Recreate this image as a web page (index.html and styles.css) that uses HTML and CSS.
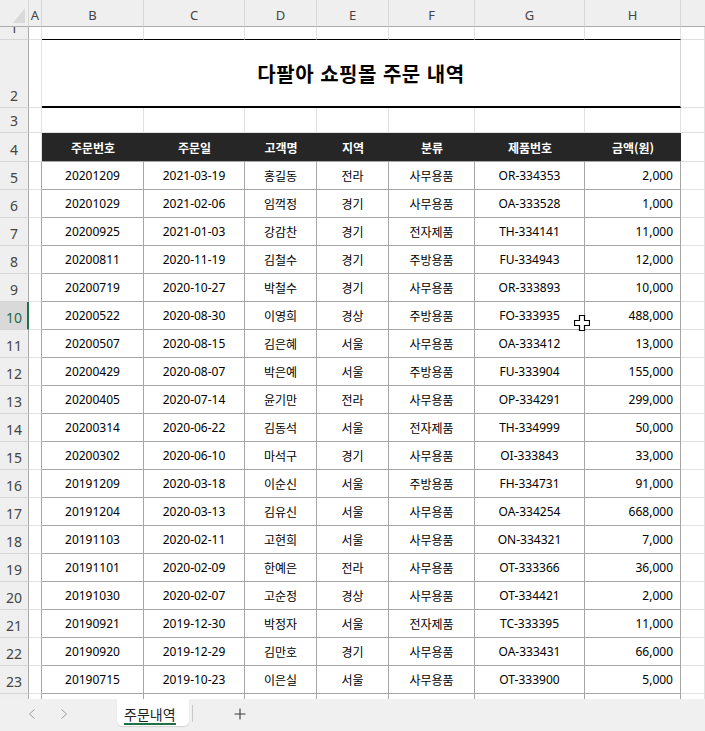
FILE: index.html
```html
<!DOCTYPE html>
<html lang="ko">
<head>
<meta charset="utf-8">
<title>주문내역</title>
<link rel="stylesheet" href="styles.css">
</head>
<body>
<div class="app">
  <div class="sheet">
    <div class="r hc">
      <div class="corner"><span class="tri"></span></div>
      <div class="ch">A</div><div class="ch">B</div><div class="ch">C</div><div class="ch">D</div><div class="ch">E</div><div class="ch">F</div><div class="ch">G</div><div class="ch">H</div><div class="ch last"></div>
    </div>
    <div class="r h1">
      <div class="rh">1</div><div class="g"></div>
      <div class="g top"></div><div class="g top"></div><div class="g top"></div><div class="g top"></div><div class="g top"></div><div class="g top"></div><div class="g top"></div><div class="g"></div>
    </div>
    <div class="r h2">
      <div class="rh">2</div><div class="g"></div>
      <div class="title">다팔아 쇼핑몰 주문 내역</div>
      <div class="g"></div>
    </div>
    <div class="r h3">
      <div class="rh">3</div><div class="g"></div>
      <div class="g"></div><div class="g"></div><div class="g"></div><div class="g"></div><div class="g"></div><div class="g"></div><div class="g"></div><div class="g"></div>
    </div>
    <div class="r h4">
      <div class="rh">4</div><div class="g"></div>
      <div class="th">주문번호</div><div class="th">주문일</div><div class="th">고객명</div><div class="th">지역</div><div class="th">분류</div><div class="th">제품번호</div><div class="th">금액(원)</div>
      <div class="g"></div>
    </div>
    <div class="r hd"><div class="rh">5</div><div class="ta"></div><div class="t">20201209</div><div class="t">2021-03-19</div><div class="t">홍길동</div><div class="t">전라</div><div class="t">사무용품</div><div class="t">OR-334353</div><div class="t num">2,000</div><div class="g"></div></div>
    <div class="r hd"><div class="rh">6</div><div class="ta"></div><div class="t">20201029</div><div class="t">2021-02-06</div><div class="t">임꺽정</div><div class="t">경기</div><div class="t">사무용품</div><div class="t">OA-333528</div><div class="t num">1,000</div><div class="g"></div></div>
    <div class="r hd"><div class="rh">7</div><div class="ta"></div><div class="t">20200925</div><div class="t">2021-01-03</div><div class="t">강감찬</div><div class="t">경기</div><div class="t">전자제품</div><div class="t">TH-334141</div><div class="t num">11,000</div><div class="g"></div></div>
    <div class="r hd"><div class="rh">8</div><div class="ta"></div><div class="t">20200811</div><div class="t">2020-11-19</div><div class="t">김철수</div><div class="t">경기</div><div class="t">주방용품</div><div class="t">FU-334943</div><div class="t num">12,000</div><div class="g"></div></div>
    <div class="r hd"><div class="rh">9</div><div class="ta"></div><div class="t">20200719</div><div class="t">2020-10-27</div><div class="t">박철수</div><div class="t">경기</div><div class="t">사무용품</div><div class="t">OR-333893</div><div class="t num">10,000</div><div class="g"></div></div>
    <div class="r hd"><div class="rh sel">10</div><div class="ta"></div><div class="t">20200522</div><div class="t">2020-08-30</div><div class="t">이영희</div><div class="t">경상</div><div class="t">주방용품</div><div class="t">FO-333935</div><div class="t num">488,000</div><div class="g"></div></div>
    <div class="r hd"><div class="rh">11</div><div class="ta"></div><div class="t">20200507</div><div class="t">2020-08-15</div><div class="t">김은혜</div><div class="t">서울</div><div class="t">사무용품</div><div class="t">OA-333412</div><div class="t num">13,000</div><div class="g"></div></div>
    <div class="r hd"><div class="rh">12</div><div class="ta"></div><div class="t">20200429</div><div class="t">2020-08-07</div><div class="t">박은예</div><div class="t">서울</div><div class="t">주방용품</div><div class="t">FU-333904</div><div class="t num">155,000</div><div class="g"></div></div>
    <div class="r hd"><div class="rh">13</div><div class="ta"></div><div class="t">20200405</div><div class="t">2020-07-14</div><div class="t">윤기만</div><div class="t">전라</div><div class="t">사무용품</div><div class="t">OP-334291</div><div class="t num">299,000</div><div class="g"></div></div>
    <div class="r hd"><div class="rh">14</div><div class="ta"></div><div class="t">20200314</div><div class="t">2020-06-22</div><div class="t">김동석</div><div class="t">서울</div><div class="t">전자제품</div><div class="t">TH-334999</div><div class="t num">50,000</div><div class="g"></div></div>
    <div class="r hd"><div class="rh">15</div><div class="ta"></div><div class="t">20200302</div><div class="t">2020-06-10</div><div class="t">마석구</div><div class="t">경기</div><div class="t">사무용품</div><div class="t">OI-333843</div><div class="t num">33,000</div><div class="g"></div></div>
    <div class="r hd"><div class="rh">16</div><div class="ta"></div><div class="t">20191209</div><div class="t">2020-03-18</div><div class="t">이순신</div><div class="t">서울</div><div class="t">주방용품</div><div class="t">FH-334731</div><div class="t num">91,000</div><div class="g"></div></div>
    <div class="r hd"><div class="rh">17</div><div class="ta"></div><div class="t">20191204</div><div class="t">2020-03-13</div><div class="t">김유신</div><div class="t">서울</div><div class="t">사무용품</div><div class="t">OA-334254</div><div class="t num">668,000</div><div class="g"></div></div>
    <div class="r hd"><div class="rh">18</div><div class="ta"></div><div class="t">20191103</div><div class="t">2020-02-11</div><div class="t">고현희</div><div class="t">서울</div><div class="t">사무용품</div><div class="t">ON-334321</div><div class="t num">7,000</div><div class="g"></div></div>
    <div class="r hd"><div class="rh">19</div><div class="ta"></div><div class="t">20191101</div><div class="t">2020-02-09</div><div class="t">한예은</div><div class="t">전라</div><div class="t">사무용품</div><div class="t">OT-333366</div><div class="t num">36,000</div><div class="g"></div></div>
    <div class="r hd"><div class="rh">20</div><div class="ta"></div><div class="t">20191030</div><div class="t">2020-02-07</div><div class="t">고순정</div><div class="t">경상</div><div class="t">사무용품</div><div class="t">OT-334421</div><div class="t num">2,000</div><div class="g"></div></div>
    <div class="r hd"><div class="rh">21</div><div class="ta"></div><div class="t">20190921</div><div class="t">2019-12-30</div><div class="t">박정자</div><div class="t">서울</div><div class="t">전자제품</div><div class="t">TC-333395</div><div class="t num">11,000</div><div class="g"></div></div>
    <div class="r hd"><div class="rh">22</div><div class="ta"></div><div class="t">20190920</div><div class="t">2019-12-29</div><div class="t">김만호</div><div class="t">경기</div><div class="t">사무용품</div><div class="t">OA-333431</div><div class="t num">66,000</div><div class="g"></div></div>
    <div class="r hd"><div class="rh">23</div><div class="ta"></div><div class="t">20190715</div><div class="t">2019-10-23</div><div class="t">이은실</div><div class="t">서울</div><div class="t">사무용품</div><div class="t">OT-333900</div><div class="t num">5,000</div><div class="g"></div></div>
    <div class="r hd"><div class="rh"></div><div class="ta"></div><div class="t"></div><div class="t"></div><div class="t"></div><div class="t"></div><div class="t"></div><div class="t"></div><div class="t"></div><div class="g"></div></div>
  </div>
  <div class="tabbar">
    <div class="nav"><svg width="8" height="10" viewBox="0 0 8 10"><polyline points="6.5,0.5 1.5,5 6.5,9.5" fill="none" stroke="#9c9c9c" stroke-width="1"/></svg></div>
    <div class="nav"><svg width="8" height="10" viewBox="0 0 8 10"><polyline points="1.5,0.5 6.5,5 1.5,9.5" fill="none" stroke="#9c9c9c" stroke-width="1"/></svg></div>
    <div class="tab"><span class="tabname">주문내역</span></div>
    <div class="sep"></div>
    <div class="add"><svg width="12" height="12" viewBox="0 0 12 12"><path d="M6 0.5V11.5M0.5 6H11.5" stroke="#3a3a3a" stroke-width="1.1" fill="none"/></svg></div>
  </div>
  <svg class="cursor" width="16" height="16" viewBox="0 0 16 16"><path d="M5.5 0.5H10.5V5.5H15.5V10.5H10.5V15.5H5.5V10.5H0.5V5.5H5.5Z" fill="#fff" stroke="#000" stroke-width="1.2"/></svg>
</div>
</body>
</html>
```

FILE: styles.css
```css
* { box-sizing: border-box; }
html, body { margin: 0; padding: 0; background: #fff; }
body {
  width: 705px;
  height: 731px;
  overflow: hidden;
  font-family: "Noto Sans", "Noto Sans CJK KR", sans-serif;
  color: #000;
}
.app { position: relative; width: 705px; height: 731px; }
.sheet { height: 699px; overflow: hidden; }
.r {
  display: grid;
  grid-template-columns: 29px 13px 102px 101px 72px 72px 86px 110px 96px 1fr;
}
.hc { height: 27px; }
.h1 { height: 13px; }
.h2 { height: 68px; }
.h3 { height: 25px; }
.h4 { height: 29px; }
.hd { height: 28px; }

.corner {
  background: #efefef;
  border-right: 1px solid #d6d6d6;
  border-bottom: 1px solid #ababab;
  position: relative;
}
.tri {
  position: absolute;
  left: 13px;
  top: 8px;
  width: 0;
  height: 0;
  border-left: 12px solid transparent;
  border-bottom: 15px solid #dadada;
}
.ch {
  background: #efefef;
  border-right: 1px solid #d6d6d6;
  border-bottom: 1px solid #ababab;
  color: #444;
  font-size: 13px;
  display: flex;
  align-items: center;
  justify-content: center;
  padding-top: 3px;
}
.ch.last { border-right: none; }
.rh {
  background: #efefef;
  border-right: 1px solid #ababab;
  border-bottom: 1px solid #d6d6d6;
  color: #444;
  font-size: 14px;
  line-height: 16px;
  display: flex;
  align-items: flex-end;
  justify-content: center;
  padding-bottom: 3px;
  overflow: hidden;
}
.rh.sel {
  background: #d9d9d9;
  color: #1f6b45;
  border-right: 2px solid #217346;
  padding-left: 1px;
}
.g {
  border-right: 1px solid #e1e1e1;
  border-bottom: 1px solid #e1e1e1;
}
.g.top { border-bottom-color: #000; }
.title {
  grid-column: 3 / 10;
  border-right: 1px solid #d4d4d4;
  border-bottom: 2px solid #000;
  display: flex;
  align-items: center;
  justify-content: center;
  font-family: "Noto Sans CJK KR", sans-serif;
  font-weight: 700;
  font-size: 20px;
  letter-spacing: 0.5px;
  padding-top: 1px;
}
.th {
  background: #262626;
  color: #fff;
  font-family: "Noto Sans CJK KR", sans-serif;
  font-weight: 700;
  font-size: 12px;
  border-bottom: 1px solid #a6a6a6;
  display: flex;
  align-items: center;
  justify-content: center;
}
.ta {
  border-right: 1px solid #a6a6a6;
  border-bottom: 1px solid #e1e1e1;
}
.t {
  border-right: 1px solid #a6a6a6;
  border-bottom: 1px solid #a6a6a6;
  font-size: 12px;
  display: flex;
  align-items: center;
  justify-content: center;
  white-space: nowrap;
}
.t.num { justify-content: flex-end; padding-right: 7px; }

.tabbar {
  height: 32px;
  background: #f0f0f0;
  display: flex;
  align-items: flex-start;
  padding-left: 16px;
}
.nav {
  width: 32px;
  height: 32px;
  display: flex;
  align-items: center;
  justify-content: center;
  padding-bottom: 2px;
}
.tab {
  margin-left: 37px;
  width: 72px;
  height: 27px;
  background: #fff;
  border-radius: 0 0 5px 5px;
  box-shadow: 0 1px 1px rgba(0,0,0,0.12);
  padding: 4px 0 0 7px;
}
.tabname {
  display: inline-block;
  font-family: "Noto Sans CJK KR", sans-serif;
  font-size: 14px;
  line-height: 17px;
  color: #222;
  border-bottom: 2px solid #1e7145;
}
.sep {
  margin-left: 3px;
  margin-top: 6px;
  width: 1px;
  height: 17px;
  background: #c8c8c8;
}
.add {
  margin-left: 36px;
  width: 22px;
  height: 32px;
  display: flex;
  align-items: center;
  justify-content: center;
  padding-bottom: 2px;
}
.cursor {
  position: absolute;
  left: 574px;
  top: 315px;
}
```
